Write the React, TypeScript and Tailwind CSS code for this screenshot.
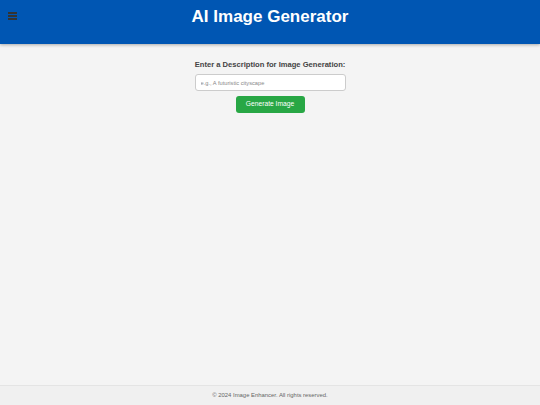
export default function App() {
  return (
    <div className="flex min-h-[405px] flex-col bg-[#f4f4f4] font-['Liberation_Sans',Arial,sans-serif]">
      <header className="relative flex h-[44px] justify-center bg-[#0056b3] pt-[7px] shadow-[0_1px_3px_rgba(0,0,0,0.3)]">
        <button className="absolute left-[8px] top-[12px] flex w-[9px] flex-col gap-[1.5px]">
          <span className="h-[1.5px] w-full bg-[#333]" />
          <span className="h-[1.5px] w-full bg-[#333]" />
          <span className="h-[1.5px] w-full bg-[#333]" />
        </button>
        <h1 className="text-[17px] font-bold leading-[1.2] text-white">AI Image Generator</h1>
      </header>

      <main className="flex flex-1 flex-col items-center pt-[15px]">
        <label className="text-[7.6px] font-bold leading-[11px] text-[#444]">Enter a Description for Image Generation:</label>
        <input
          placeholder="e.g., A futuristic cityscape"
          className="mt-[4px] h-[17px] w-[151px] rounded-[3px] border border-[#ccc] bg-white px-[5px] text-[5.7px] placeholder:text-[#888] outline-none"
        />
        <button className="mt-[5px] h-[17px] w-[69px] rounded-[3px] bg-[#28a745] text-[6.7px] text-white">
          Generate Image
        </button>
      </main>

      <footer className="flex h-[20px] items-center justify-center border-t border-[#e4e4e4] bg-[#f0f0f0] text-[5.9px] text-[#666]">
        © 2024 Image Enhancer. All rights reserved.
      </footer>
    </div>
  );
}
